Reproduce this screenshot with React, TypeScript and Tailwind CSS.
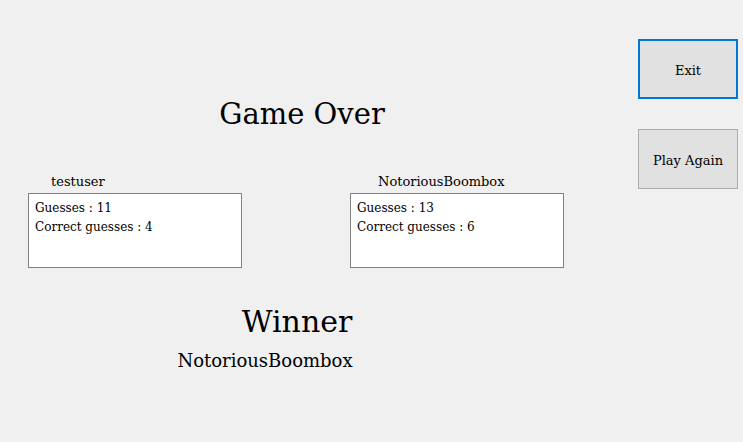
import React from 'react';

type Player = { name: string; guesses: number; correct: number; labelOffset: string };

const players: Player[] = [
  { name: 'testuser', guesses: 11, correct: 4, labelOffset: 'ml-[23px]' },
  { name: 'NotoriousBoombox', guesses: 13, correct: 6, labelOffset: 'ml-[28px]' },
];

function PlayerPanel({ player }: { player: Player }) {
  return (
    <div className="flex flex-col w-[214px]">
      <div className={`h-[16px] leading-[18px] text-[13px] whitespace-nowrap ${player.labelOffset}`}>
        {player.name}
      </div>
      <div className="mt-[4px] h-[75px] bg-white border border-[#828282] pl-[6px] pt-[5px] text-[12px] leading-[19px]">
        <div>Guesses : {player.guesses}</div>
        <div>Correct guesses : {player.correct}</div>
      </div>
    </div>
  );
}

export default function App() {
  return (
    <div
      className="w-[743px] h-[442px] bg-[#f0f0f0] flex text-black overflow-hidden"
      style={{ fontFamily: '"DejaVu Serif", "Liberation Serif", serif' }}
    >
      {/* Results */}
      <div className="w-[638px] flex flex-col">
        <div className="mt-[96px] ml-[202px] w-[200px] h-[36px] leading-[36px] text-center text-[29px] whitespace-nowrap">
          Game Over
        </div>

        <div className="mt-[41px] ml-[28px] flex gap-[108px]">
          {players.map(p => (
            <PlayerPanel key={p.name} player={p} />
          ))}
        </div>

        <div className="mt-[36px] ml-[197px] w-[200px] h-[36px] leading-[36px] text-center text-[30px] whitespace-nowrap">
          Winner
        </div>
        <div className="mt-[10px] ml-[165px] w-[200px] h-[22px] leading-[22px] text-center text-[18px] whitespace-nowrap">
          NotoriousBoombox
        </div>
      </div>

      {/* Buttons */}
      <div className="w-[100px] mt-[39px] flex flex-col gap-[30px]">
        <button className="h-[60px] pt-[4px] bg-[#e1e1e1] border-2 border-[#0078d7] text-[13px]">Exit</button>
        <button className="h-[60px] pt-[4px] bg-[#e1e1e1] border border-[#adadad] text-[13px]">Play Again</button>
      </div>
    </div>
  );
}
